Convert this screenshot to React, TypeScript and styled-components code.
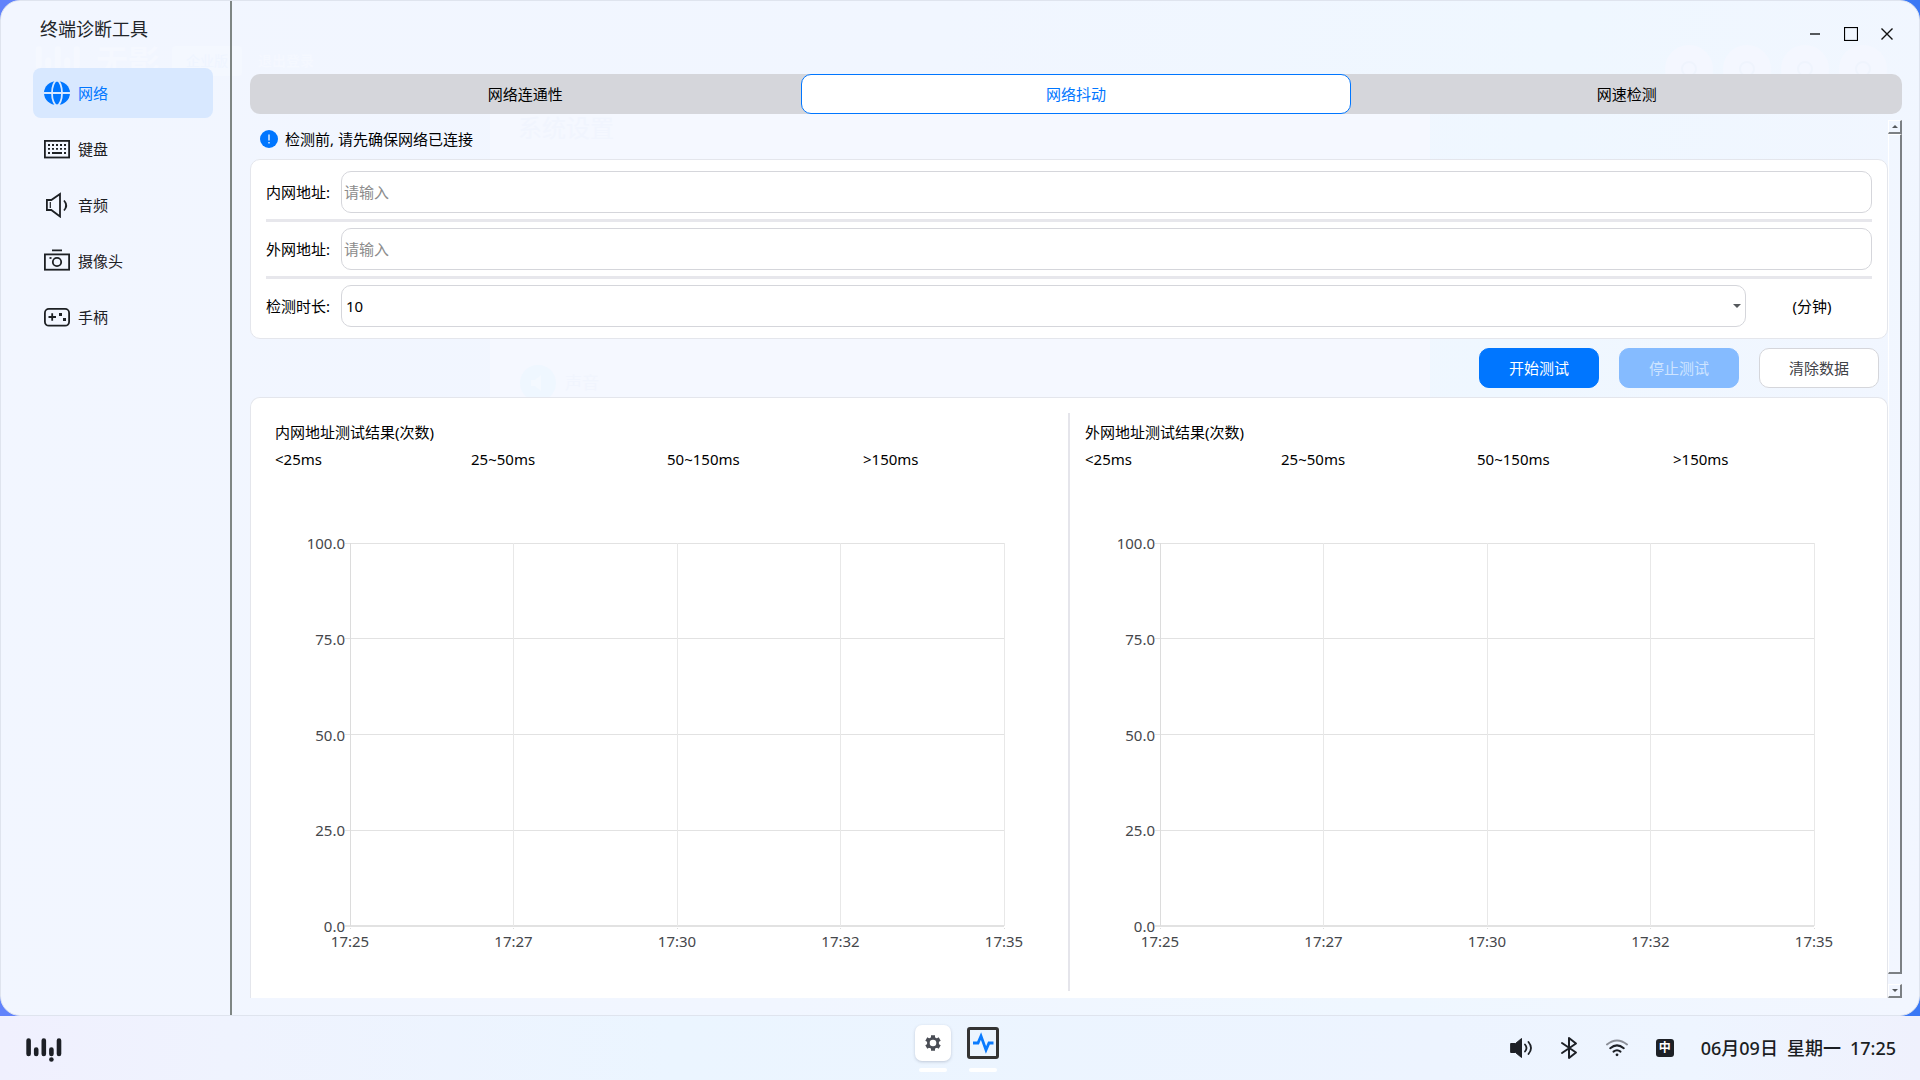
import React from "react";
import styled, { createGlobalStyle, css } from "styled-components";

const GlobalStyle = createGlobalStyle`
  *, *::before, *::after { box-sizing: border-box; }
  body {
    margin: 0;
    font-family: "Noto Sans", "Noto Sans CJK SC", sans-serif;
    font-size: 15px;
    line-height: 20px;
    color: #000;
  }
  button, input, select { font: inherit; color: inherit; margin: 0; }
  p, h1, h2, ul { margin: 0; padding: 0; font-size: inherit; font-weight: inherit; }
`;

const Desktop = styled.div`
  height: 100vh;
  display: flex;
  flex-direction: column;
  background: linear-gradient(90deg, #6283fb, #3a78f5);
`;

const AppWindow = styled.main`
  position: relative;
  flex: 1;
  min-height: 0;
  display: flex;
  border: 1px solid #dfe4ee;
  border-radius: 20px;
  overflow: hidden;
  background: linear-gradient(100deg, #f2f6ff 0%, #f1f6ff 45%, #eff7ff 75%, #f2f6ff 100%);
`;

/* Faint shapes of the window lying behind the translucent one */
const Backdrop = styled.div`
  position: absolute;
  inset: 0;
  pointer-events: none;
`;

const GhostHeader = styled.div`
  position: absolute;
  top: 45px;
  left: 31px;
  display: flex;
  align-items: center;
  gap: 12px;
  color: #f5f8ff;
  font-size: 32px;
  font-weight: 700;
  line-height: 30px;
`;

const GhostBadge = styled.span`
  padding: 0 14px;
  border-radius: 4px;
  background: #f4f8ff;
  color: #eff5ff;
  font-size: 14px;
  font-weight: 400;
`;

const GhostLink = styled.span`
  padding-left: 4px;
  font-size: 14px;
`;

const GhostPanel = styled.div`
  position: absolute;
  top: 100px;
  left: 489px;
  right: 489px;
  height: 300px;
  display: flex;
  flex-direction: column;
  justify-content: space-between;
  padding: 12px 24px 0 28px;
  background: #f5f8ff;
  color: #f1f5fe;
  font-size: 24px;
  line-height: 30px;
`;

const GhostRow = styled.div`
  display: flex;
  align-items: center;
  gap: 9px;
  padding-left: 2px;
  font-size: 17px;
`;

const GhostActions = styled.div`
  position: absolute;
  top: 44px;
  right: 32px;
  display: flex;
  gap: 10px;
`;

const GhostCircle = styled.span`
  display: grid;
  place-items: center;
  width: 48px;
  height: 48px;
  border-radius: 50%;
  background: #f4f7ff;
  &::after {
    content: "";
    width: 16px;
    height: 16px;
    border: 2px solid #eff4fd;
    border-radius: 50%;
  }
`;

const Sidebar = styled.aside`
  position: relative;
  flex: none;
  width: 231px;
  padding: 16px 16px 0 32px;
  border-right: 2px solid #7f8684;
`;

const AppTitle = styled.h1`
  padding-left: 7px;
  font-size: 18px;
  line-height: 24px;
  color: #222529;
`;

const NavList = styled.ul`
  display: flex;
  flex-direction: column;
  gap: 6px;
  margin-top: 27px;
  list-style: none;
`;

const NavButton = styled.button<{ $active?: boolean }>`
  display: flex;
  align-items: center;
  gap: 8px;
  width: 180px;
  height: 50px;
  padding: 0 11px;
  border: 0;
  border-radius: 8px;
  background: ${(p) => (p.$active ? "#d8e8ff" : "transparent")};
  color: ${(p) => (p.$active ? "#0076ff" : "#1d2024")};
`;

const Content = styled.section`
  position: relative;
  flex: 1;
  min-width: 0;
  display: flex;
  flex-direction: column;
  padding: 0 17px 17px 18px;
`;

const TitleBar = styled.header`
  display: flex;
  justify-content: flex-end;
  gap: 6px;
  height: 73px;
  padding-top: 18px;
`;

const WindowButton = styled.button`
  display: grid;
  place-items: center;
  width: 30px;
  height: 30px;
  padding: 0;
  border: 0;
  background: transparent;
`;

const TabBar = styled.div`
  display: grid;
  grid-template-columns: repeat(3, 1fr);
  height: 40px;
  border-radius: 10px;
  background: #d5d6db;
`;

const Tab = styled.button<{ $active?: boolean }>`
  padding: 0;
  border: 1px solid transparent;
  border-radius: 10px;
  background: transparent;
  ${(p) =>
    p.$active &&
    css`
      border-color: #0076ff;
      background: #fff;
      color: #0076ff;
    `}
`;

const ScrollArea = styled.div`
  flex: 1;
  min-height: 0;
  display: flex;
  margin-top: 6px;
`;

const ScrollBody = styled.div`
  flex: 1;
  min-width: 0;
  display: flex;
  flex-direction: column;
  overflow: hidden;
`;

const Notice = styled.p`
  display: flex;
  align-items: center;
  gap: 7px;
  height: 39px;
  padding: 0 10px 1px;
`;

const Card = styled.div`
  border: 1px solid #e4e6ec;
  border-radius: 10px;
  background: #fff;
`;

const FormCard = styled(Card)`
  display: flex;
  flex-direction: column;
  gap: 6px;
  padding: 11px 15px;
`;

const Rule = styled.hr`
  width: 100%;
  height: 3px;
  margin: 0;
  border: 0;
  background: #e7e7ec;
`;

const FormRow = styled.div`
  display: flex;
  align-items: center;
  gap: 6px;
`;

const FieldLabel = styled.label`
  flex: none;
  width: 69px;
`;

const field = css`
  width: 100%;
  height: 42px;
  border: 1px solid #d5d6db;
  border-radius: 10px;
  background: #fff;
  outline: 0;
`;

const TextField = styled.input`
  ${field}
  padding: 0 2px;
  &::placeholder { color: #8c8c8c; opacity: 1; }
`;

const SelectBox = styled.div`
  position: relative;
  flex: 1;
  svg {
    position: absolute;
    top: 19px;
    right: 5px;
    pointer-events: none;
  }
`;

const SelectField = styled.select`
  ${field}
  display: block;
  padding: 0 4px;
  appearance: none;
`;

const Unit = styled.span`
  flex: none;
  width: 120px;
  text-align: center;
`;

const Actions = styled.div`
  display: flex;
  justify-content: flex-end;
  gap: 20px;
  padding: 9px;
`;

const ActionButton = styled.button<{ $kind: "primary" | "disabled" | "plain" }>`
  width: 120px;
  height: 40px;
  padding: 0;
  border: 1px solid ${(p) => ({ primary: "#0076ff", disabled: "#85bbff", plain: "#d5d6db" })[p.$kind]};
  border-radius: 10px;
  background: ${(p) => ({ primary: "#0076ff", disabled: "#85bbff", plain: "#fff" })[p.$kind]};
  color: ${(p) => ({ primary: "#fff", disabled: "#cee4ff", plain: "#3f4247" })[p.$kind]};
`;

const ResultCard = styled(Card)`
  flex: 1;
  min-height: 0;
  display: flex;
  gap: 6px;
  padding: 15px 15px 7px;
  border-bottom: 0;
  border-bottom-left-radius: 0;
  border-bottom-right-radius: 0;
`;

const ResultDivider = styled.div`
  flex: none;
  width: 2px;
  background: #e5e5eb;
`;

const Result = styled.section`
  flex: 1;
  min-width: 0;
  display: flex;
  flex-direction: column;
  padding: 9px 9px 0;
`;

const Buckets = styled.ul`
  display: grid;
  grid-template-columns: repeat(4, 1fr);
  gap: 6px;
  margin-top: 7px;
  list-style: none;
`;

const ChartArea = styled.div`
  flex: 1;
  min-height: 0;
  padding: 74px 49px 65px 75px;
`;

const ChartSvg = styled.svg`
  display: block;
  width: 100%;
  height: 100%;
  overflow: visible;
  line { shape-rendering: crispEdges; }
  text { fill: #45474b; font-size: 15px; }
`;

const ScrollBar = styled.div`
  flex: none;
  width: 14px;
  display: flex;
  flex-direction: column;
`;

const bevel = css`
  border: solid;
  border-width: 1px 2px 2px 1px;
  border-color: #fff #7c8084 #7c8084 #fff;
  background: transparent;
`;

const ScrollButton = styled.button`
  ${bevel}
  display: grid;
  place-items: center;
  height: 14px;
  padding: 0;
`;

const ScrollThumb = styled.div`
  ${bevel}
  flex: 1;
  margin-bottom: 10px;
`;

const TaskBar = styled.footer`
  flex: none;
  display: grid;
  grid-template-columns: 1fr auto 1fr;
  height: 64px;
  padding: 0 24px;
  background: linear-gradient(90deg, #f0f0fe 0%, #eff3fe 12%, #ebf5ff 35%, #edf4ff 75%, #eef5ff 88%, #eff1fd 100%);
`;

const StartButton = styled.button`
  justify-self: start;
  align-self: center;
  padding: 4px 2px 0;
  border: 0;
  background: transparent;
  svg { display: block; }
`;

const Dock = styled.div`
  display: flex;
  gap: 14px;
  padding: 9px 4px 0 0;
`;

const DockItem = styled.button<{ $tile?: boolean }>`
  display: flex;
  flex-direction: column;
  align-items: center;
  gap: 7px;
  padding: 0;
  border: 0;
  background: transparent;
  span {
    display: grid;
    place-items: center;
    width: 36px;
    height: 36px;
    border-radius: 7px;
    ${(p) => p.$tile && "background: #fff; box-shadow: 0 1px 3px rgba(60, 70, 100, 0.25);"}
  }
  &::after {
    content: "";
    width: 28px;
    height: 4px;
    border-radius: 2px;
    background: #fff;
  }
`;

const Tray = styled.div`
  justify-self: end;
  display: flex;
  align-items: center;
  gap: 24px;
`;

const TrayButton = styled.button`
  width: 24px;
  height: 24px;
  padding: 0;
  border: 0;
  background: transparent;
  svg { display: block; }
`;

const InputMethod = styled.span`
  display: block;
  width: 18px;
  height: 18px;
  margin: auto;
  border-radius: 3px;
  background: #1d2026;
  color: #fff;
  font-size: 12px;
  font-weight: 700;
  line-height: 17px;
`;

const Clock = styled.time`
  display: flex;
  gap: 9px;
  color: #1b1e23;
  font-size: 18px;
  font-weight: 500;
  line-height: 24px;
`;

const icons = {
  globe: (
    <svg width="26" height="26" viewBox="0 0 26 26">
      <ellipse cx="13" cy="13" rx="13" ry="12" fill="currentColor" />
      <ellipse cx="13" cy="13" rx="5" ry="12.3" fill="none" stroke="#d8e8ff" strokeWidth="1.8" />
      <path d="M0 13h26" stroke="#d8e8ff" strokeWidth="1.8" />
    </svg>
  ),
  keyboard: (
    <svg width="26" height="26" viewBox="0 0 26 26" fill="none" stroke="currentColor" strokeWidth="1.8">
      <rect x="0.9" y="4.9" width="24.2" height="16.6" />
      <path d="M4 9h18M4 12.8h18" strokeDasharray="2 2" />
      <path d="M4 17h2M8 17h10M20 17h2" />
    </svg>
  ),
  audio: (
    <svg width="26" height="26" viewBox="0 0 26 26" fill="none" stroke="currentColor" strokeWidth="1.8">
      <path d="M2.9 8h4.4L16 2v22.5L7.3 18H2.9z" />
      <path d="M6.3 10v6" strokeWidth="1.2" />
      <path d="M20 8.5q4.4 5 0 10" />
    </svg>
  ),
  camera: (
    <svg width="26" height="26" viewBox="0 0 26 26" fill="none" stroke="currentColor" strokeWidth="1.8">
      <rect x="0.9" y="6.4" width="24.2" height="15.3" />
      <path d="M8 2.3h10" />
      <circle cx="13" cy="14" r="4.2" />
      <path d="M5.500 10h2" />
    </svg>
  ),
  gamepad: (
    <svg width="26" height="26" viewBox="0 0 26 26" fill="none" stroke="currentColor" strokeWidth="1.8">
      <rect x="0.9" y="4.9" width="24.2" height="16.8" rx="4" />
      <path d="M4.5 13h7.5M8.2 9.3v7.5" />
      <path d="M15 10.500h3M19 15.500h3" strokeWidth="2.8" />
    </svg>
  ),
};

const navItems = [
  { label: "网络", icon: icons.globe },
  { label: "键盘", icon: icons.keyboard },
  { label: "音频", icon: icons.audio },
  { label: "摄像头", icon: icons.camera },
  { label: "手柄", icon: icons.gamepad },
];

const buckets = ["<25ms", "25~50ms", "50~150ms", ">150ms"];
const yTicks = ["100.0", "75.0", "50.0", "25.0", "0.0"];
const xTicks = ["17:25", "17:27", "17:30", "17:32", "17:35"];

function JitterChart() {
  return (
    <ChartSvg>
      {yTicks.map((label, i) => {
        const y = `${i * 25}%`;
        return (
          <g key={label}>
            <line x1="-5" x2="100%" y1={y} y2={y} stroke="#e2e2e2" strokeWidth={i === 4 ? 2 : 1} />
            <text x="-5" y={y} dy="6" textAnchor="end">{label}</text>
          </g>
        );
      })}
      {xTicks.map((label, i) => {
        const x = `${i * 25}%`;
        return (
          <g key={label}>
            <line x1={x} x2={x} y1="0" y2="100%" stroke={i ? "#e8e8e8" : "#dcdcdc"} strokeWidth="1" />
            <line x1={x} x2={x} y1="100%" y2="100%" transform="translate(0 2)" stroke="#dcdcdc" strokeWidth="1" strokeLinecap="square" />
            <text x={x} y="100%" dy="21" textAnchor="middle">{label}</text>
          </g>
        );
      })}
    </ChartSvg>
  );
}

function ResultPanel({ title }: { title: string }) {
  return (
    <Result>
      <h2>{title}</h2>
      <Buckets>
        {buckets.map((b) => (
          <li key={b}>{b}</li>
        ))}
      </Buckets>
      <ChartArea>
        <JitterChart />
      </ChartArea>
    </Result>
  );
}

function WuyingLogo() {
  return (
    <svg width="36" height="24" viewBox="0 0 36 24" stroke="#1d2026" strokeWidth="4.6" strokeLinecap="round">
      <path d="M2.6 2.5v13.5M10.2 11.5v4.5M17.8 2.5v13.5M25.4 11.5v4.5M33 2.5v13.5" />
      <circle cx="25.4" cy="21.5" r="2.3" fill="#1d2026" stroke="none" />
    </svg>
  );
}

export default function App() {
  return (
    <Desktop>
      <GlobalStyle />
      <AppWindow>
        <Backdrop aria-hidden="true">
          <GhostPanel>
            <span>系统设置</span>
            <GhostRow>
              <svg width="36" height="36" viewBox="0 0 36 36">
                <circle cx="18" cy="18" r="18" fill="#eff7ff" />
                <path d="M11 15h4l6-5v16l-6-5h-4z" fill="#f4f9ff" />
              </svg>
              声音
            </GhostRow>
          </GhostPanel>
          <GhostHeader>
            <svg width="52" height="30" viewBox="0 0 36 24" stroke="#f5f8ff" strokeWidth="4.6" strokeLinecap="round">
              <path d="M2.6 2.5v13.5M10.2 11.5v4.5M17.8 2.5v13.5M25.4 11.5v4.5M33 2.5v13.5" />
            </svg>
            无影
            <GhostBadge>企业版</GhostBadge>
            <GhostLink>退出登录</GhostLink>
          </GhostHeader>
          <GhostActions>
            <GhostCircle />
            <GhostCircle />
            <GhostCircle />
            <GhostCircle />
          </GhostActions>
        </Backdrop>

        <Sidebar>
          <AppTitle>终端诊断工具</AppTitle>
          <nav>
            <NavList>
              {navItems.map((item, i) => (
                <li key={item.label}>
                  <NavButton type="button" $active={i === 0}>
                    {item.icon}
                    {item.label}
                  </NavButton>
                </li>
              ))}
            </NavList>
          </nav>
        </Sidebar>

        <Content>
          <TitleBar>
            <WindowButton type="button" aria-label="最小化">
              <svg width="14" height="14" viewBox="0 0 14 14"><path d="M2 7h10" stroke="#55585c" strokeWidth="2" /></svg>
            </WindowButton>
            <WindowButton type="button" aria-label="最大化">
              <svg width="14" height="14" viewBox="0 0 14 14"><rect x="0.5" y="0.5" width="13" height="13" fill="none" stroke="#000" strokeWidth="1.2" /></svg>
            </WindowButton>
            <WindowButton type="button" aria-label="关闭">
              <svg width="14" height="14" viewBox="0 0 14 14"><path d="M1.5 1.5l11 11M12.5 1.5l-11 11" stroke="#111" strokeWidth="1.4" /></svg>
            </WindowButton>
          </TitleBar>

          <TabBar role="tablist">
            <Tab type="button" role="tab" aria-selected="false">网络连通性</Tab>
            <Tab type="button" role="tab" aria-selected="true" $active>网络抖动</Tab>
            <Tab type="button" role="tab" aria-selected="false">网速检测</Tab>
          </TabBar>

          <ScrollArea>
            <ScrollBody>
              <Notice>
                <svg width="18" height="18" viewBox="0 0 18 18">
                  <circle cx="9" cy="9" r="9" fill="#0076ff" />
                  <path d="M9 4.500v6M9 12v1.500" stroke="#fff" strokeWidth="1.3" />
                </svg>
                检测前, 请先确保网络已连接
              </Notice>

              <FormCard>
                <FormRow>
                  <FieldLabel htmlFor="lan">内网地址:</FieldLabel>
                  <TextField id="lan" type="text" placeholder="请输入" />
                </FormRow>
                <Rule />
                <FormRow>
                  <FieldLabel htmlFor="wan">外网地址:</FieldLabel>
                  <TextField id="wan" type="text" placeholder="请输入" />
                </FormRow>
                <Rule />
                <FormRow>
                  <FieldLabel htmlFor="duration">检测时长:</FieldLabel>
                  <SelectBox>
                    <SelectField id="duration" defaultValue="10">
                      <option>10</option>
                      <option>30</option>
                      <option>60</option>
                    </SelectField>
                    <svg width="8" height="4" viewBox="0 0 8 4"><path d="M0 0h8L4 4z" fill="#55585c" /></svg>
                  </SelectBox>
                  <Unit>(分钟)</Unit>
                </FormRow>
              </FormCard>

              <Actions>
                <ActionButton type="button" $kind="primary">开始测试</ActionButton>
                <ActionButton type="button" $kind="disabled" disabled>停止测试</ActionButton>
                <ActionButton type="button" $kind="plain">清除数据</ActionButton>
              </Actions>

              <ResultCard>
                <ResultPanel title="内网地址测试结果(次数)" />
                <ResultDivider />
                <ResultPanel title="外网地址测试结果(次数)" />
              </ResultCard>
            </ScrollBody>

            <ScrollBar>
              <ScrollButton type="button" aria-label="向上滚动">
                <svg width="6" height="3" viewBox="0 0 6 3"><path d="M0 3h6L3 0z" fill="#55585c" /></svg>
              </ScrollButton>
              <ScrollThumb />
              <ScrollButton type="button" aria-label="向下滚动">
                <svg width="6" height="3" viewBox="0 0 6 3"><path d="M0 0h6L3 3z" fill="#55585c" /></svg>
              </ScrollButton>
            </ScrollBar>
          </ScrollArea>
        </Content>
      </AppWindow>

      <TaskBar>
        <StartButton type="button" aria-label="开始">
          <WuyingLogo />
        </StartButton>
        <Dock>
          <DockItem type="button" aria-label="设置" $tile>
            <span>
              <svg width="16" height="16" viewBox="0 0 16 16">
                <path d="M8 0.3v15.4M1.3 4.1l13.4 7.8M14.7 4.1L1.3 11.9" stroke="#4a4d55" strokeWidth="4" />
                <circle cx="8" cy="8" r="6" fill="#4a4d55" />
                <circle cx="8" cy="8" r="3.3" fill="#fff" />
              </svg>
            </span>
          </DockItem>
          <DockItem type="button" aria-label="终端诊断工具">
            <span>
              <svg width="32" height="32" viewBox="0 0 32 32" fill="none">
                <rect x="1.5" y="1.5" width="29" height="29" rx="1.5" stroke="#333" strokeWidth="3" />
                <path d="M6 16h5l3-7 5 14 3-7h4.5" stroke="#0a7bff" strokeWidth="2.8" />
              </svg>
            </span>
          </DockItem>
        </Dock>
        <Tray>
          <TrayButton type="button" aria-label="音量">
            <svg width="24" height="24" viewBox="0 0 24 24" fill="none" stroke="#1d2026" strokeWidth="1.8" strokeLinecap="round">
              <path d="M2 7.5h4.500l6-5v19l-6-5H2z" fill="#1d2026" strokeWidth="1" strokeLinejoin="round" />
              <path d="M16 8.5q3 3.5 0 7M19.500 6q5 6 0 12" />
            </svg>
          </TrayButton>
          <TrayButton type="button" aria-label="蓝牙">
            <svg width="24" height="24" viewBox="0 0 24 24" fill="none" stroke="#1d2026" strokeWidth="2" strokeLinejoin="round" strokeLinecap="round">
              <path d="M5 7l14 9.5-7 5.5V2l7 5.5L5 17" />
            </svg>
          </TrayButton>
          <TrayButton type="button" aria-label="无线网络">
            <svg width="24" height="24" viewBox="0 0 24 24" fill="none" stroke="#1d2026" strokeWidth="2" strokeLinecap="round">
              <path d="M2 8.5q10-8 20 0" stroke="#8b8f98" />
              <path d="M5.2 12.2q6.8-5.6 13.6 0M8.5 15.6q3.5-2.8 7 0" />
              <circle cx="12" cy="18.8" r="1.4" fill="#1d2026" stroke="none" />
            </svg>
          </TrayButton>
          <TrayButton type="button" aria-label="输入法">
            <InputMethod>中</InputMethod>
          </TrayButton>
          <Clock>
            <span>06月09日</span>
            <span>星期一</span>
            <span>17:25</span>
          </Clock>
        </Tray>
      </TaskBar>
    </Desktop>
  );
}
